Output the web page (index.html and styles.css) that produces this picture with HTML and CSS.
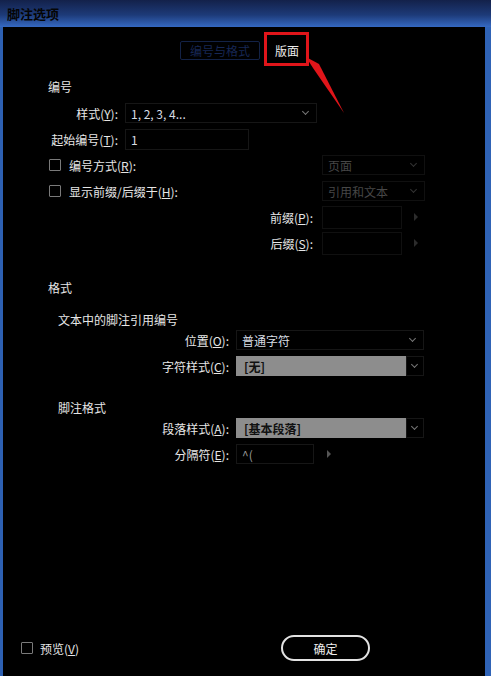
FILE: index.html
```html
<!DOCTYPE html>
<html lang="zh-CN">
<head>
  <meta charset="UTF-8" />
  <title>脚注选项</title>
  <link rel="stylesheet" href="styles.css">
</head>
<body>
  <div class="window">
    <div class="titlebar"><span class="title-text">脚注选项</span></div>
    <div class="frame">
      <div class="tabs">
        <div class="tab">编号与格式</div>
        <div class="tab active">版面</div>
      </div>

      <div class="content">
        <div class="section-title">编号</div>
        <div class="row">
          <label class="lbl w1">样式(<u>Y</u>):</label>
          <div class="field select w-style">1, 2, 3, 4...<span class="chev"></span></div>
        </div>
        <div class="row">
          <label class="lbl w1">起始编号(<u>T</u>):</label>
          <div class="field w-start">1</div>
        </div>
        <div class="row">
          <div class="check-label w-check"><span class="box"></span>编号方式(<u>R</u>):</div>
          <div class="field select disabled w-mode">页面<span class="chev"></span></div>
        </div>
        <div class="row">
          <div class="check-label w-check"><span class="box"></span>显示前缀/后缀于(<u>H</u>):</div>
          <div class="field select disabled w-mode">引用和文本<span class="chev"></span></div>
        </div>
        <div class="row">
          <label class="lbl w2">前缀(<u>P</u>):</label>
          <div class="field disabled w-prefix"></div>
          <span class="tri"></span>
        </div>
        <div class="row">
          <label class="lbl w2">后缀(<u>S</u>):</label>
          <div class="field disabled w-prefix"></div>
          <span class="tri"></span>
        </div>

        <div class="section-title second">格式</div>
        <div class="sub-title">文本中的脚注引用编号</div>
        <div class="row">
          <label class="lbl w3">位置(<u>O</u>):</label>
          <div class="field select w-pos">普通字符<span class="chev"></span></div>
        </div>
        <div class="row">
          <label class="lbl w3">字符样式(<u>C</u>):</label>
          <div class="field gray w-gray">[无]</div>
          <div class="field select chev-only"><span class="chev"></span></div>
        </div>

        <div class="sub-title third">脚注格式</div>
        <div class="row">
          <label class="lbl w3">段落样式(<u>A</u>):</label>
          <div class="field gray w-gray">[基本段落]</div>
          <div class="field select chev-only"><span class="chev"></span></div>
        </div>
        <div class="row">
          <label class="lbl w3">分隔符(<u>E</u>):</label>
          <div class="field w-sep">^(</div>
          <span class="tri sep"></span>
        </div>
      </div>

      <div class="footer">
        <div class="check-label preview"><span class="box"></span>预览(<u>V</u>)</div>
        <button class="ok">确定</button>
      </div>
    </div>

    <div class="marker"></div>
    <svg class="arrow" width="60" height="70" viewBox="0 0 60 70">
      <polygon points="0,0 13,7 38,56 7,11" fill="#e0151a"/>
    </svg>
  </div>
</body>
</html>
```

FILE: styles.css
```css
body {
  margin: 0;
  background: #000;
  font-family: "Noto Sans CJK SC", "Noto Sans", sans-serif;
  font-size: 12px;
  color: #e6e6e6;
}
.window {
  position: relative;
  width: 491px;
  height: 676px;
  display: flex;
  flex-direction: column;
}
.titlebar {
  height: 27px;
  line-height: 27px;
  padding-left: 7px;
  background: linear-gradient(#13214a, #1d3a78 55%, #3569c2);
}
.title-text {
  color: #050505;
  font-size: 13px;
  font-weight: bold;
}
.frame {
  flex: 1;
  display: flex;
  flex-direction: column;
  background: #000;
  border-left: 3px solid #2d60b2;
  border-right: 6px solid #2f63b6;
}
.tabs {
  display: flex;
  align-items: center;
  margin-top: 14px;
  padding-left: 177px;
  height: 19px;
}
.tab {
  height: 17px;
  line-height: 17px;
  width: 78px;
  text-align: center;
  border: 1px solid #132246;
  border-radius: 2px;
  color: #172754;
}
.tab.active {
  border: none;
  width: auto;
  margin-left: 15px;
  color: #ececec;
}
.content {
  padding-left: 45px;
}
.section-title {
  margin-top: 19px;
  height: 16px;
  line-height: 16px;
  margin-bottom: 5px;
}
.section-title.second {
  margin-top: 24px;
  margin-bottom: 16px;
}
.sub-title {
  padding-left: 10px;
  height: 15px;
  line-height: 15px;
}
.sub-title.third {
  margin-top: 21px;
}
.row {
  display: flex;
  align-items: center;
  height: 26px;
}
.lbl {
  text-align: right;
  padding-right: 7px;
  box-sizing: border-box;
}
.w1 { width: 77px; }
.w2 { width: 272px; }
.w3 { width: 188px; }
.w-check { width: 272px; }
.check-label {
  display: flex;
  align-items: center;
}
.box {
  width: 10px;
  height: 10px;
  border: 1px solid #7a7a7a;
  border-radius: 1px;
  margin: 0 8px 0 1px;
}
.field {
  position: relative;
  height: 20px;
  line-height: 20px;
  padding-left: 5px;
  box-sizing: border-box;
  border: 1px solid #161616;
  color: #d8dde4;
}
.select .chev {
  position: absolute;
  right: 8px;
  top: 5px;
  width: 4px;
  height: 4px;
  border-right: 1px solid #777;
  border-bottom: 1px solid #777;
  transform: rotate(45deg);
}
.disabled {
  color: #474747;
  border-color: #101010;
}
.disabled .chev {
  border-color: #333;
}
.w-style { width: 192px; }
.w-start { width: 124px; height: 21px; }
.w-mode { width: 103px; margin-left: 2px; }
.w-prefix { width: 80px; height: 23px; margin-left: 2px; }
.w-pos { width: 188px; }
.w-gray { width: 170px; }
.w-sep { width: 78px; color: #9a9a9a; }
.gray {
  background: #8d8d8d;
  border-color: #8d8d8d;
  color: #111;
  font-weight: bold;
  padding-left: 7px;
}
.chev-only {
  width: 18px;
  padding: 0;
}
.chev-only .chev {
  right: 6px;
}
.tri {
  margin-left: 12px;
  width: 0;
  height: 0;
  border-top: 4px solid transparent;
  border-bottom: 4px solid transparent;
  border-left: 4px solid #2c2c2c;
}
.tri.sep {
  margin-left: 13px;
  border-left-color: #555;
}
.footer {
  margin-top: auto;
  display: flex;
  align-items: center;
  padding: 0 0 15px 17px;
}
.preview .box {
  margin-right: 7px;
}
.ok {
  margin-left: 202px;
  width: 89px;
  height: 26px;
  border: 2px solid #e2e2e2;
  border-radius: 13px;
  background: #000;
  color: #eee;
  font-family: inherit;
  font-size: 12px;
}
.marker {
  position: absolute;
  left: 264px;
  top: 32px;
  width: 39px;
  height: 28px;
  border: 3px solid #e0151a;
}
.arrow {
  position: absolute;
  left: 306px;
  top: 57px;
}
```
